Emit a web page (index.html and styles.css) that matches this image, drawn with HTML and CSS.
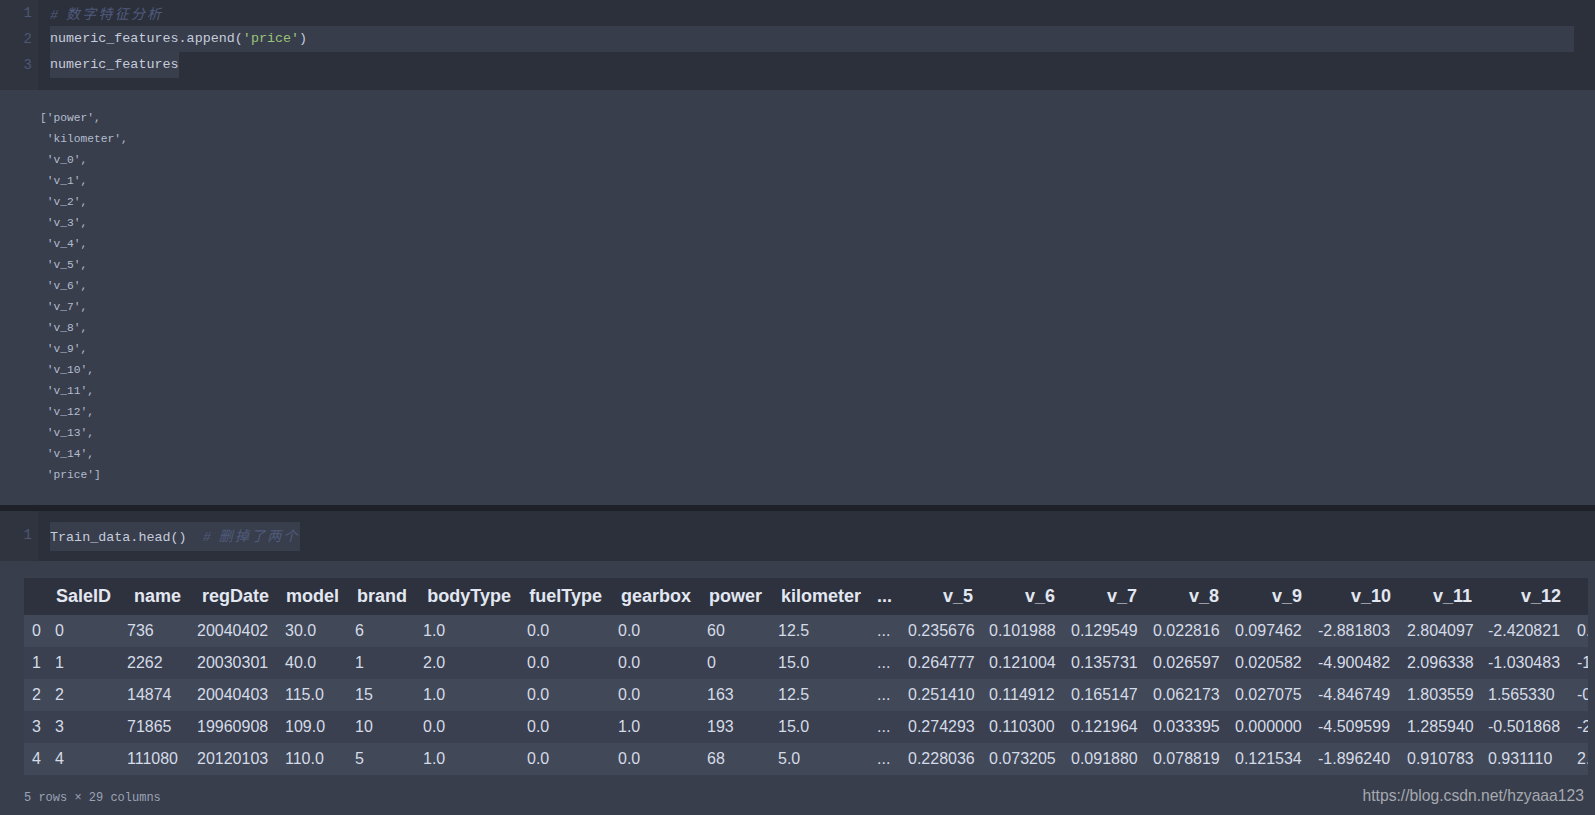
FILE: index.html
```html
<!DOCTYPE html>
<html lang="zh-CN">
<head>
<meta charset="utf-8">
<title>Notebook</title>
<link rel="stylesheet" href="styles.css">
</head>
<body>
<div class="cell">
  <div class="input first">
    <div class="gutter"><div>1</div><div>2</div><div>3</div></div>
    <div class="code">
      <div class="line"><span class="cm"># <span class="cjk">数字特征分析</span></span></div>
      <div class="line active">numeric_features.append(<span class="str">'price'</span>)</div>
      <div class="line"><span class="sel">numeric_features</span></div>
    </div>
  </div>
  <div class="output stream-out"><pre class="stream">['power',
 'kilometer',
 'v_0',
 'v_1',
 'v_2',
 'v_3',
 'v_4',
 'v_5',
 'v_6',
 'v_7',
 'v_8',
 'v_9',
 'v_10',
 'v_11',
 'v_12',
 'v_13',
 'v_14',
 'price']</pre></div>
</div>
<div class="divider"></div>
<div class="cell">
  <div class="input second">
    <div class="gutter"><div>1</div></div>
    <div class="code">
      <div class="line"><span class="sel">Train_data.head()  <span class="cm"># <span class="cjk">删掉了两个</span></span></span></div>
    </div>
  </div>
  <div class="output table-out">
    <div class="df-wrap">
      <table class="df">
        <colgroup>
          <col class="c23"><col class="c72"><col class="c70"><col class="c88"><col class="c70"><col class="c68"><col class="c104"><col class="c91"><col class="c89"><col class="c71"><col class="c99"><col class="c31"><col class="c81"><col class="c82"><col class="c82"><col class="c82"><col class="c83"><col class="c89"><col class="c81"><col class="c89"><col class="c82">
        </colgroup>
        <thead>
          <tr><th></th><th>SaleID</th><th>name</th><th>regDate</th><th>model</th><th>brand</th><th>bodyType</th><th>fuelType</th><th>gearbox</th><th>power</th><th>kilometer</th><th>...</th><th>v_5</th><th>v_6</th><th>v_7</th><th>v_8</th><th>v_9</th><th>v_10</th><th>v_11</th><th>v_12</th><th>v_13</th></tr>
        </thead>
        <tbody>
          <tr><td>0</td><td>0</td><td>736</td><td>20040402</td><td>30.0</td><td>6</td><td>1.0</td><td>0.0</td><td>0.0</td><td>60</td><td>12.5</td><td>...</td><td>0.235676</td><td>0.101988</td><td>0.129549</td><td>0.022816</td><td>0.097462</td><td>-2.881803</td><td>2.804097</td><td>-2.420821</td><td>0.795292</td></tr>
          <tr><td>1</td><td>1</td><td>2262</td><td>20030301</td><td>40.0</td><td>1</td><td>2.0</td><td>0.0</td><td>0.0</td><td>0</td><td>15.0</td><td>...</td><td>0.264777</td><td>0.121004</td><td>0.135731</td><td>0.026597</td><td>0.020582</td><td>-4.900482</td><td>2.096338</td><td>-1.030483</td><td>-1.722674</td></tr>
          <tr><td>2</td><td>2</td><td>14874</td><td>20040403</td><td>115.0</td><td>15</td><td>1.0</td><td>0.0</td><td>0.0</td><td>163</td><td>12.5</td><td>...</td><td>0.251410</td><td>0.114912</td><td>0.165147</td><td>0.062173</td><td>0.027075</td><td>-4.846749</td><td>1.803559</td><td>1.565330</td><td>-0.832687</td></tr>
          <tr><td>3</td><td>3</td><td>71865</td><td>19960908</td><td>109.0</td><td>10</td><td>0.0</td><td>0.0</td><td>1.0</td><td>193</td><td>15.0</td><td>...</td><td>0.274293</td><td>0.110300</td><td>0.121964</td><td>0.033395</td><td>0.000000</td><td>-4.509599</td><td>1.285940</td><td>-0.501868</td><td>-2.438353</td></tr>
          <tr><td>4</td><td>4</td><td>111080</td><td>20120103</td><td>110.0</td><td>5</td><td>1.0</td><td>0.0</td><td>0.0</td><td>68</td><td>5.0</td><td>...</td><td>0.228036</td><td>0.073205</td><td>0.091880</td><td>0.078819</td><td>0.121534</td><td>-1.896240</td><td>0.910783</td><td>0.931110</td><td>2.834518</td></tr>
        </tbody>
      </table>
    </div>
    <p class="shape">5 rows × 29 columns</p>
  </div>
</div>
<div class="watermark">https://blog.csdn.net/hzyaaa123</div>
</body>
</html>
```
FILE: styles.css
```css
html, body {
  margin: 0;
  padding: 0;
}
body {
  width: 1595px;
  height: 815px;
  overflow: hidden;
  position: relative;
  background: #383e4c;
  font-family: "Liberation Sans", Arial, sans-serif;
}

/* ---------- code input ---------- */
.input {
  display: flex;
  background: #2c303b;
}
.gutter {
  width: 38px;
  box-sizing: border-box;
  padding-right: 6px;
  text-align: right;
  background: #30343f;
  color: #4d5777;
  font: 14px/26px "Liberation Mono", monospace;
}
.code {
  flex: 1;
  padding-left: 12px;
  padding-right: 21px;
  color: #c5ccdb;
  font: 13.4px/26px "Liberation Mono", "Noto Sans CJK SC", monospace;
}
.first .gutter,
.first .code {
  padding-top: 0;
  padding-bottom: 12px;
}
.second .gutter,
.second .code {
  padding-top: 11px;
  padding-bottom: 13px;
}
.line {
  height: 26px;
  white-space: pre;
}
.line.active {
  background: #383d4b;
}
.sel {
  display: inline-block;
  background: #393e4c;
}
.cm {
  color: #4f5b7b;
  font-style: italic;
}
.cjk {
  font-family: "Noto Sans CJK SC", sans-serif;
  font-size: 14px;
  letter-spacing: 2.2px;
}
.str {
  color: #98c379;
}

/* ---------- outputs ---------- */
.stream-out {
  padding: 18px 0 19px 40px;
}
.stream {
  margin: 0;
  color: #b3bccd;
  font: 11.25px/21px "Liberation Mono", monospace;
}
.divider {
  height: 6px;
  background: #1f2128;
}
.table-out {
  padding: 17px 0 0 24px;
}
.df-wrap {
  width: 1564px;
  overflow: hidden;
}
.df {
  border-collapse: collapse;
  table-layout: fixed;
  width: 1627px;
}
.df th {
  height: 37px;
  padding: 0 8px;
  text-align: right;
  background: #2e323e;
  color: #e2e7f1;
  font: bold 18px "Liberation Sans", Arial, sans-serif;
  white-space: nowrap;
}
.df td {
  height: 32px;
  padding: 0 8px;
  text-align: left;
  color: #d5dbe7;
  font: 16px "Liberation Sans", Arial, sans-serif;
  white-space: nowrap;
}
.df tbody tr:nth-child(odd) { background: #414858; }
.df tbody tr:nth-child(even) { background: #3a4050; }

.c23 { width: 23px; }
.c31 { width: 31px; }
.c68 { width: 68px; }
.c70 { width: 70px; }
.c71 { width: 71px; }
.c72 { width: 72px; }
.c81 { width: 81px; }
.c82 { width: 82px; }
.c83 { width: 83px; }
.c88 { width: 88px; }
.c89 { width: 89px; }
.c91 { width: 91px; }
.c99 { width: 99px; }
.c104 { width: 104px; }

.shape {
  margin: 13px 0 0;
  color: #9aa3b5;
  font: 12px/21px "Liberation Mono", monospace;
}

.watermark {
  position: absolute;
  right: 11px;
  top: 786px;
  color: #a6a9b0;
  font: 15.7px/20px "Liberation Sans", Arial, sans-serif;
}
```
